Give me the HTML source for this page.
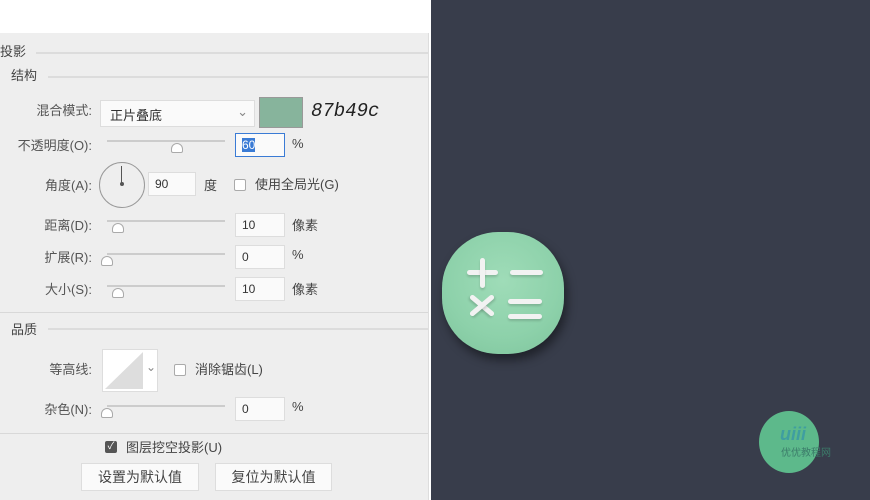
<!DOCTYPE html>
<html><head><meta charset="utf-8"><style>
*{margin:0;padding:0;box-sizing:border-box}
body{width:870px;height:500px;position:relative;overflow:hidden;background:#fff;font-family:"Liberation Sans","Noto Sans CJK SC",sans-serif;font-size:13px;color:#444}
.a{position:absolute}
.panel{left:0;top:33px;width:429px;height:467px;background:#eeeeee;border-right:1px solid #ddd}
.dark{left:431px;top:0;width:439px;height:500px;background:#383d4b}
.line{position:absolute;height:2px;background:#dcdcdc}
.lbl{position:absolute;text-align:right;width:92px;color:#555}
.inp{position:absolute;background:#fafafa;border:1px solid #ddd;height:24px;font-size:12px;padding:4px 6px;color:#333}
.sl{position:absolute;height:2px;background:#ccc;width:118px}
.th{position:absolute;width:12px;height:10px;border:1px solid #aaa;border-radius:6px 6px 2px 2px;background:#fff}
.cb{position:absolute;width:12px;height:12px;border:1px solid #aaa;border-radius:2px;background:#fff}
.btn{position:absolute;background:#fafafa;border:1px solid #ddd;height:28px;text-align:center;line-height:26px;font-size:14px;color:#444}
.bar{position:absolute;background:#f2f2f2;border-radius:3px;box-shadow:0 2px 2px rgba(0,0,0,.15)}
</style></head><body>
<div class="a panel"></div>
<div class="a dark"></div>
<div class="a" style="left:0;top:41px;font-size:13px;color:#444">投影</div>
<div class="line" style="left:36px;top:52px;width:392px"></div>
<div class="a" style="left:11px;top:65px">结构</div>
<div class="line" style="left:48px;top:76px;width:380px"></div>

<div class="lbl" style="left:0;top:100px">混合模式:</div>
<div class="a" style="left:100px;top:100px;width:155px;height:27px;background:#fafafa;border:1px solid #ddd;padding:4px 9px;color:#333">正片叠底<span style="position:absolute;right:6px;top:3px;color:#888">⌄</span></div>
<div class="a" style="left:259px;top:97px;width:44px;height:31px;background:#87b49c;border:1px solid #999"></div>
<div class="a" style="left:311px;top:100px;font-size:19px;font-style:italic;color:#222;font-family:'Liberation Mono',monospace">87b49c</div>

<div class="lbl" style="left:0;top:135px">不透明度(O):</div>
<div class="sl" style="left:107px;top:140px"></div><div class="th" style="left:171px;top:143px"></div>
<div class="inp" style="left:235px;top:133px;width:50px;border:1px solid #3a7bd5"><span style="background:#3a7bd5;color:#fff">60</span></div>
<div class="a" style="left:292px;top:136px">%</div>

<div class="lbl" style="left:0;top:175px">角度(A):</div>
<div class="a" style="left:99px;top:162px;width:46px;height:46px;border:1px solid #999;border-radius:50%"></div>
<div class="a" style="left:121px;top:166px;width:1px;height:17px;background:#555"></div>
<div class="a" style="left:120px;top:182px;width:4px;height:4px;background:#555;border-radius:50%"></div>
<div class="inp" style="left:148px;top:172px;width:48px">90</div>
<div class="a" style="left:204px;top:175px">度</div>
<div class="cb" style="left:234px;top:179px"></div>
<div class="a" style="left:255px;top:174px">使用全局光(G)</div>

<div class="lbl" style="left:0;top:215px">距离(D):</div>
<div class="sl" style="left:107px;top:220px"></div><div class="th" style="left:112px;top:223px"></div>
<div class="inp" style="left:235px;top:213px;width:50px">10</div>
<div class="a" style="left:292px;top:215px">像素</div>

<div class="lbl" style="left:0;top:247px">扩展(R):</div>
<div class="sl" style="left:107px;top:253px"></div><div class="th" style="left:101px;top:256px"></div>
<div class="inp" style="left:235px;top:245px;width:50px">0</div>
<div class="a" style="left:292px;top:247px">%</div>

<div class="lbl" style="left:0;top:279px">大小(S):</div>
<div class="sl" style="left:107px;top:285px"></div><div class="th" style="left:112px;top:288px"></div>
<div class="inp" style="left:235px;top:277px;width:50px">10</div>
<div class="a" style="left:292px;top:279px">像素</div>

<div class="line" style="left:0;top:312px;width:428px;height:1px;background:#d8d8d8"></div>
<div class="a" style="left:11px;top:319px">品质</div>
<div class="line" style="left:48px;top:328px;width:380px"></div>

<div class="lbl" style="left:0;top:359px">等高线:</div>
<div class="a" style="left:102px;top:349px;width:56px;height:43px;background:#fff;border:1px solid #ddd"></div>
<svg class="a" style="left:103px;top:350px" width="42" height="41"><polygon points="2,39 40,2 40,39" fill="#ddd"/></svg>
<div class="a" style="left:146px;top:360px;color:#888;font-size:12px">⌄</div>
<div class="cb" style="left:174px;top:364px"></div>
<div class="a" style="left:195px;top:359px">消除锯齿(L)</div>

<div class="lbl" style="left:0;top:399px">杂色(N):</div>
<div class="sl" style="left:107px;top:405px"></div><div class="th" style="left:101px;top:408px"></div>
<div class="inp" style="left:235px;top:397px;width:50px">0</div>
<div class="a" style="left:292px;top:399px">%</div>

<div class="line" style="left:0;top:433px;width:428px;height:1px;background:#d8d8d8"></div>
<div class="a" style="left:105px;top:441px;width:12px;height:12px;background:#555;border-radius:2px;color:#fff;font-size:10px;line-height:12px;text-align:center">✓</div>
<div class="a" style="left:126px;top:437px">图层挖空投影(U)</div>
<div class="btn" style="left:81px;top:463px;width:118px">设置为默认值</div>
<div class="btn" style="left:215px;top:463px;width:117px">复位为默认值</div>

<div class="a" style="left:442px;top:232px;width:122px;height:122px;border-radius:46%;background:radial-gradient(circle at 50% 40%,#9fdcb8,#8dd1aa 60%,#7ec49c);box-shadow:3px 6px 10px rgba(0,0,0,.45)"></div>
<div class="bar" style="left:467px;top:270px;width:31px;height:5px"></div>
<div class="bar" style="left:480px;top:258px;width:5px;height:30px"></div>
<div class="bar" style="left:510px;top:270px;width:33px;height:5px"></div>
<div class="bar" style="left:467px;top:303px;width:30px;height:5px;transform:rotate(40deg)"></div>
<div class="bar" style="left:467px;top:303px;width:30px;height:5px;transform:rotate(-40deg)"></div>
<div class="bar" style="left:508px;top:299px;width:34px;height:5px"></div>
<div class="bar" style="left:508px;top:314px;width:34px;height:5px"></div>

<div class="a" style="left:759px;top:411px;width:60px;height:62px;border-radius:50%;background:#5db98b"></div>
<div class="a" style="left:780px;top:424px;font-size:18px;font-weight:bold;font-style:italic;color:#3f9ea0">uiii</div>
<div class="a" style="left:781px;top:444px;font-size:10px;color:#3c7c6a">优优教程网</div>
</body></html>
